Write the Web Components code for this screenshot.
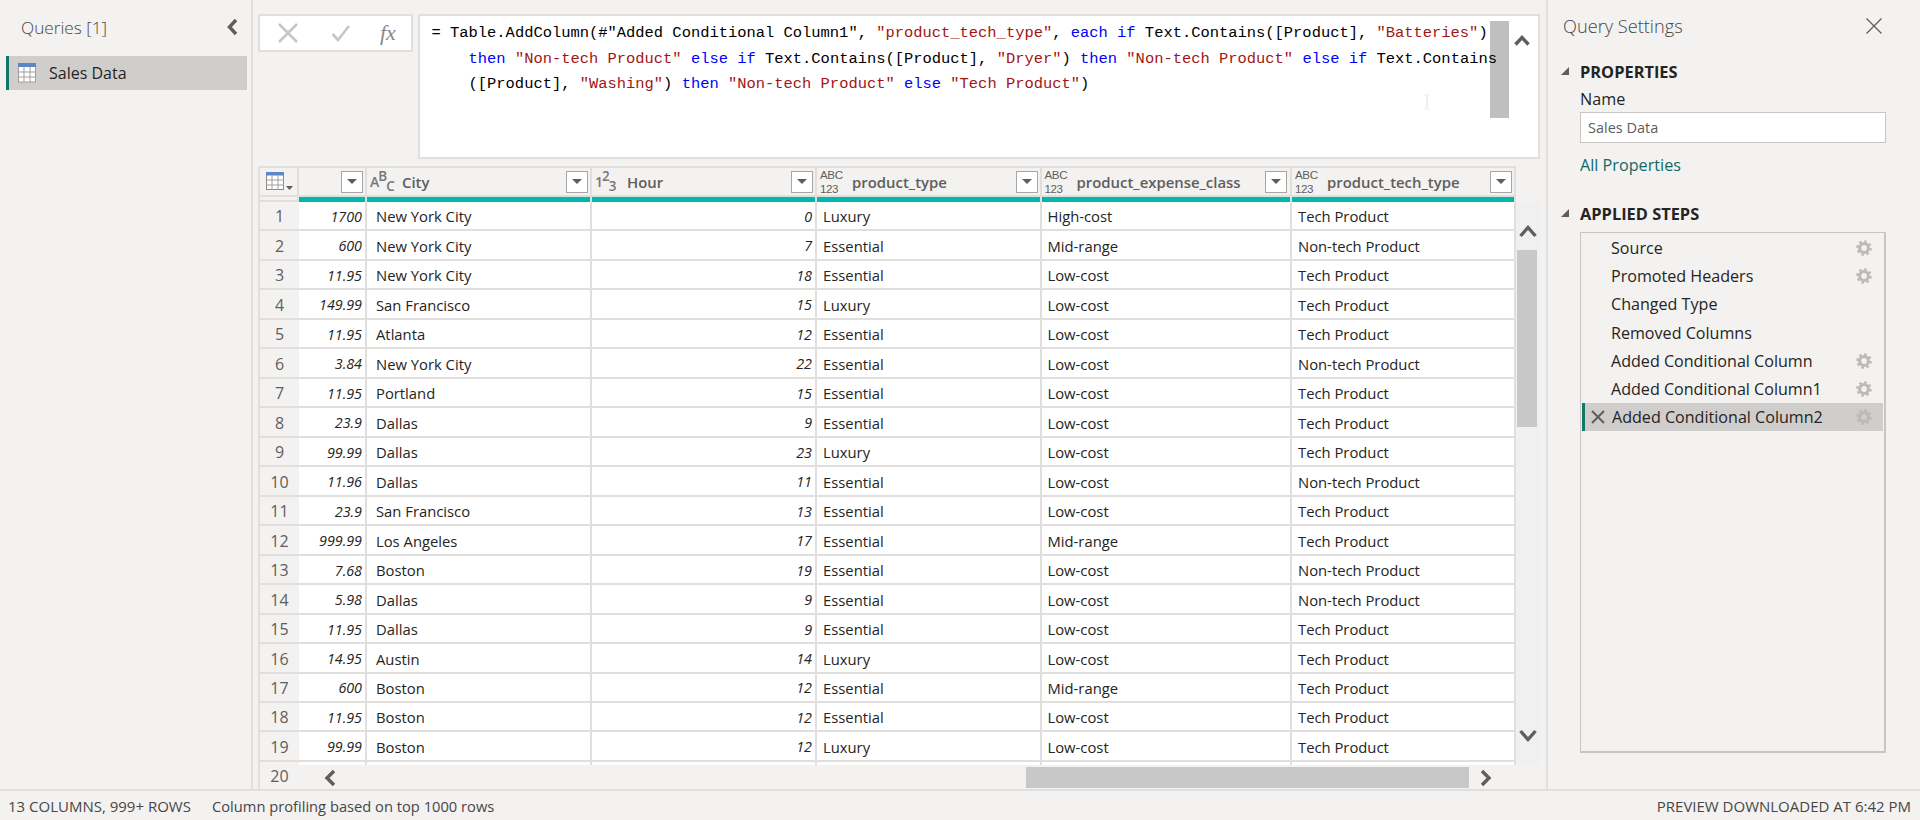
<!DOCTYPE html>
<html>
<head>
<meta charset="utf-8">
<style>
  html, body { margin: 0; height: 100%; overflow: hidden; background: #f3f2f1; }
  body { font-family: "Open Sans", "Liberation Sans", sans-serif; color: #252423; }
</style>
</head>
<body>
<pq-app></pq-app>
<script>
// small icon strings used by more than one element
const chevron = (d, w, h, c) => `<svg width="${w}" height="${h}" viewBox="0 0 ${w} ${h}"><path d="${d}" fill="none" stroke="${c || '#605e5c'}" stroke-width="3.4"/></svg>`;
const gear = `<svg width="16" height="16" viewBox="0 0 16 16"><circle cx="8" cy="8" r="4.4" fill="none" stroke="#bcbab8" stroke-width="3"/><circle cx="8" cy="8" r="6.6" fill="none" stroke="#bcbab8" stroke-width="2.4" stroke-dasharray="2.6 2.58"/></svg>`;

class PqQueries extends HTMLElement {
  constructor() {
    super();
    this.attachShadow({ mode: 'open' });
    this.shadowRoot.innerHTML = `
    <style>
      :host { display: block; width: 251px; flex: none; border-right: 2px solid #e1dfdd; box-sizing: content-box; }
      header { display: flex; justify-content: space-between; align-items: center; height: 56px; padding: 0 12px 2px 21px; box-sizing: border-box; }
      h2 { margin: 0; font-size: 17.2px; font-weight: 300; color: #484644; }
      svg { display: block; }
      .item { display: flex; align-items: center; height: 34px; margin: 0 4px 0 6px; border-left: 3px solid #117865; background: #cfcecc; font-size: 16px; }
      .item svg { margin: 0 13px 0 9px; }
    </style>
    <header><h2>Queries [1]</h2>${chevron('M10 2 L3.5 9 L10 16', 13, 18)}</header>
    <div class="item">
      <svg width="18" height="20" viewBox="0 0 18 20">
        <rect x="0.5" y="1" width="17" height="18" fill="#fff" stroke="#a19f9d"/>
        <rect x="0" y="0" width="18" height="4" fill="#5b87c5"/>
        <path d="M6 4V19M12 4V19M0 9H18M0 14H18" stroke="#a19f9d"/>
      </svg>
      <span>Sales Data</span>
    </div>`;
  }
}
customElements.define('pq-queries', PqQueries);

class PqFormula extends HTMLElement {
  constructor() {
    super();
    this.attachShadow({ mode: 'open' });
    this.shadowRoot.innerHTML = `
    <style>
      :host { display: flex; gap: 5px; height: 145px; flex: none; align-items: flex-start; }
      .tools { display: flex; align-items: center; width: 155px; height: 38px; box-sizing: border-box; background: #fff; border: 2px solid #e1dfdd; flex: none; padding-left: 18px; }
      .tools svg { display: block; }
      .fx { font: italic 22px "Liberation Serif", serif; color: #8a8886; margin-left: 29px; }
      .editor { flex: 1; height: 145px; box-sizing: border-box; background: #fff; border: 2px solid #e1dfdd; display: flex; position: relative; }
      .code { padding: 5px 0 0 11.5px; width: 1060px; flex: none; font: 15.45px/25.5px "Liberation Mono", monospace; color: #000; position: relative; z-index: 1; white-space: pre; }
      .code div + div { padding-left: 4ch; }
      .k { color: #0000ff; }
      .s { color: #a31515; }
      .thumb { position: absolute; left: 1070px; top: 5px; width: 19px; height: 97px; background: #bfbfbf; }
      .up { position: absolute; left: 1094px; top: 14px; }
      .cursor { position: absolute; left: 1003px; top: 78px; }
    </style>
    <div class="tools">
      <svg width="20" height="20" viewBox="0 0 20 20"><path d="M1 1L19 19M19 1L1 19" stroke="#c8c6c4" stroke-width="2.6"/></svg>
      <svg style="margin-left:33px" width="20" height="18" viewBox="0 0 20 18"><path d="M1.5 10L7 16L18 2" fill="none" stroke="#c8c6c4" stroke-width="2.6"/></svg>
      <span class="fx">fx</span>
    </div>
    <div class="editor">
      <div class="code">
        <div>= Table.AddColumn(#"Added Conditional Column1", <span class="s">"product_tech_type"</span>, <span class="k">each if</span> Text.Contains([Product], <span class="s">"Batteries"</span>)</div>
        <div><span class="k">then</span> <span class="s">"Non-tech Product"</span> <span class="k">else if</span> Text.Contains([Product], <span class="s">"Dryer"</span>) <span class="k">then</span> <span class="s">"Non-tech Product"</span> <span class="k">else if</span> Text.Contains</div>
        <div>([Product], <span class="s">"Washing"</span>) <span class="k">then</span> <span class="s">"Non-tech Product"</span> <span class="k">else</span> <span class="s">"Tech Product"</span>)</div>
      </div>
      <div class="thumb"></div>
      <div class="up">${chevron('M1.5 10.5 L8 3.5 L14.5 10.5', 16, 13)}</div>
      <svg class="cursor" width="8" height="16" viewBox="0 0 8 16"><path d="M1 1H3.5V15H1M7 1H4.5V15H7" fill="none" stroke="#eeeeee"/></svg>
    </div>`;
    // the template literal leaves whitespace between the line divs, drop it so white-space: pre adds no blank lines
    const code = this.shadowRoot.querySelector('.code');
    [...code.childNodes].forEach(n => { if (n.nodeType === 3) n.remove(); });
  }
}
customElements.define('pq-formula', PqFormula);

const rows = [
  ['1700', 'New York City', 0, 'Luxury', 'High-cost', 'Tech Product'],
  ['600', 'New York City', 7, 'Essential', 'Mid-range', 'Non-tech Product'],
  ['11.95', 'New York City', 18, 'Essential', 'Low-cost', 'Tech Product'],
  ['149.99', 'San Francisco', 15, 'Luxury', 'Low-cost', 'Tech Product'],
  ['11.95', 'Atlanta', 12, 'Essential', 'Low-cost', 'Tech Product'],
  ['3.84', 'New York City', 22, 'Essential', 'Low-cost', 'Non-tech Product'],
  ['11.95', 'Portland', 15, 'Essential', 'Low-cost', 'Tech Product'],
  ['23.9', 'Dallas', 9, 'Essential', 'Low-cost', 'Tech Product'],
  ['99.99', 'Dallas', 23, 'Luxury', 'Low-cost', 'Tech Product'],
  ['11.96', 'Dallas', 11, 'Essential', 'Low-cost', 'Non-tech Product'],
  ['23.9', 'San Francisco', 13, 'Essential', 'Low-cost', 'Tech Product'],
  ['999.99', 'Los Angeles', 17, 'Essential', 'Mid-range', 'Tech Product'],
  ['7.68', 'Boston', 19, 'Essential', 'Low-cost', 'Non-tech Product'],
  ['5.98', 'Dallas', 9, 'Essential', 'Low-cost', 'Non-tech Product'],
  ['11.95', 'Dallas', 9, 'Essential', 'Low-cost', 'Tech Product'],
  ['14.95', 'Austin', 14, 'Luxury', 'Low-cost', 'Tech Product'],
  ['600', 'Boston', 12, 'Essential', 'Mid-range', 'Tech Product'],
  ['11.95', 'Boston', 12, 'Essential', 'Low-cost', 'Tech Product'],
  ['99.99', 'Boston', 12, 'Luxury', 'Low-cost', 'Tech Product'],
];

class PqGrid extends HTMLElement {
  constructor() {
    super();
    this.attachShadow({ mode: 'open' });
  }

  connectedCallback() {
    this.render();
  }

  render() {
    const filter = `<span class="filter"><i></i></span>`;
    const abc = `<span class="ty abc">ABC<br>123</span>`;
    const heads = [
      ['<span class="ty ab">A<sup>B</sup><sub>C</sub></span>', 'City'],
      ['<span class="ty ab">1<sup>2</sup><sub>3</sub></span>', 'Hour'],
      [abc, 'product_type'],
      [abc, 'product_expense_class'],
      [abc, 'product_tech_type'],
    ];
    let body = '';
    rows.forEach((r, i) => {
      body += `<div class="row">
        <div class="idx">${i + 1}</div>
        <div class="c num">${r[0]}</div>
        <div class="c first">${r[1]}</div>
        <div class="c num">${r[2]}</div>
        <div class="c">${r[3]}</div>
        <div class="c">${r[4]}</div>
        <div class="c">${r[5]}</div>
      </div>`;
    });
    this.shadowRoot.innerHTML = `
    <style>
      :host { display: flex; flex: 1; min-height: 0; margin-top: 7px; }
      .table { --cols: 41px 68px 225px 225px 224.5px 250.5px 224px; width: 1258px; flex: none; position: relative; overflow: hidden; }
      .head, .teal, .row { display: grid; grid-template-columns: var(--cols); }
      .head { height: 31px; box-sizing: border-box; border-top: 2px solid #e1dfdd; background: #f3f2f1; border-bottom: 2px solid #e1dfdd; }
      .head > div { display: flex; align-items: center; border-right: 2px solid #e1dfdd; padding: 0 2px 0 3px; box-sizing: border-box; min-width: 0; }
      .head > div:first-child { border-left: 2px solid #e1dfdd; padding-left: 6px; }
      .head > div:nth-child(6) { padding-right: 3px; }
      .head b { font-size: 14.9px; font-weight: 600; color: #605e5c; flex: 1; white-space: nowrap; }
      .ty { width: 32px; flex: none; color: #605e5c; }
      .abc { font: 400 11.6px/13.4px "Liberation Sans", sans-serif; letter-spacing: -0.4px; color: #605e5c; }
      .ab { font-size: 14px; font-weight: 600; line-height: 20px; color: #797775; letter-spacing: -1px; }
      sup, sub { font-size: 13.5px; line-height: 0; vertical-align: baseline; position: relative; }
      sup { top: -6px; } sub { top: 4px; }
      .filter { width: 22px; height: 22px; box-sizing: border-box; flex: none; background: #fff; border: 1px solid #a8a6a4; display: flex; align-items: center; justify-content: center; margin-left: auto; }
      .filter i { border: 5px solid transparent; border-top: 5.5px solid #605e5c; border-bottom: 0; }
      .teal { height: 5px; }
      .teal div { background: #01b8aa; border-right: 2px solid #e1dfdd; }
      .teal div:first-child { background: #f3f2f1; border-left: 2px solid #e1dfdd; border-bottom: 2px solid #e1dfdd; }
      .row { height: 29.47px; box-sizing: border-box; background: #fff; }
      .idx { background: #f3f2f1; border-left: 2px solid #e1dfdd; border-bottom: 2px solid #e1dfdd; color: #605e5c; font-size: 16px; display: flex; align-items: center; justify-content: center; padding-top: 1.5px; }
      .c { border-right: 2px solid #e1dfdd; border-bottom: 2px solid #e1dfdd; padding: 1.5px 7px 0 6px; font-size: 14.8px; display: flex; align-items: center; white-space: nowrap; overflow: hidden; }
      .first { padding-left: 9px; }
      .num { font-size: 14.3px; font-style: italic; justify-content: flex-end; padding-right: 3px; }
      .hbar { position: absolute; left: 41px; right: 0; top: 599px; height: 25px; background: #f3f2f1; }
      .hbar .t { position: absolute; left: 727px; right: 47px; top: 2px; height: 21px; background: #c8c8c8; }
      .hbar svg { position: absolute; top: 4px; }
      .v { width: 24px; margin-top: 36px; margin-bottom: 24px; background: #f0f0f0; position: relative; }
      .v .t { position: absolute; left: 1px; right: 3px; top: 48px; height: 177px; background: #c8c8c8; }
      .v svg { position: absolute; left: 3px; }
    </style>
    <div class="table">
      <div class="head">
        <div><svg width="28" height="20" viewBox="0 0 28 20"><rect x=".5" y=".5" width="17" height="17" fill="#fff" stroke="#8a8886"/><rect width="18" height="3.5" fill="#5b87c5"/><path d="M6 3V18M12 3V18M0 8H18M0 13H18" stroke="#a19f9d"/><path d="M20 14H27L23.5 18Z" fill="#605e5c"/></svg></div>
        <div>${filter}</div>
        ${heads.map(h => `<div>${h[0]}<b>${h[1]}</b>${filter}</div>`).join('')}
      </div>
      <div class="teal"><div></div><div></div><div></div><div></div><div></div><div></div><div></div></div>
      ${body}
      <div class="row"><div class="idx">20</div><div class="c"></div><div class="c"></div><div class="c"></div><div class="c"></div><div class="c"></div><div class="c"></div></div>
      <div class="hbar">
        ${chevron('M11 2 L4 9 L11 16', 14, 18).replace('<svg', '<svg style="left:24px"')}
        <div class="t"></div>
        ${chevron('M3 2 L10 9 L3 16', 14, 18).replace('<svg', '<svg style="right:23px"')}
      </div>
    </div>
    <div class="v">
      <svg style="top:22px" width="18" height="14" viewBox="0 0 18 14"><path d="M1.5 12 L9 3.5 L16.5 12" fill="none" stroke="#605e5c" stroke-width="3.4"/></svg>
      <div class="t"></div>
      <svg style="bottom:22px" width="18" height="14" viewBox="0 0 18 14"><path d="M1.5 2 L9 10.5 L16.5 2" fill="none" stroke="#605e5c" stroke-width="3.4"/></svg>
    </div>`;
  }
}
customElements.define('pq-grid', PqGrid);

class PqStep extends HTMLElement {
  constructor() {
    super();
    this.attachShadow({ mode: 'open' });
    const sel = this.hasAttribute('selected');
    this.shadowRoot.innerHTML = `
    <style>
      :host { display: flex; align-items: center; height: 28.2px; font-size: 16.1px; }
      :host([selected]) { background: #cfcecc; margin: 0 1px; }
      .bar { width: 3px; align-self: stretch; flex: none; }
      :host([selected]) .bar { background: #117865; }
      .x { width: 28px; flex: none; display: flex; justify-content: center; margin-left: -1px; }
      .x svg, .g svg { display: block; }
      .n { flex: 1; white-space: nowrap; }
      .g { width: 16px; margin-right: 12px; flex: none; }
      :host([selected]) .g { margin-right: 11px; }
    </style>
    <span class="bar"></span>
    <span class="x">${sel ? '<svg width="14" height="14" viewBox="0 0 14 14"><path d="M1 1L13 13M13 1L1 13" stroke="#605e5c" stroke-width="2"/></svg>' : ''}</span>
    <span class="n"><slot></slot></span>
    <span class="g">${this.hasAttribute('gear') ? gear : ''}</span>`;
  }
}
customElements.define('pq-step', PqStep);

class PqSection extends HTMLElement {
  constructor() {
    super();
    this.attachShadow({ mode: 'open' });
    this.shadowRoot.innerHTML = `
    <style>
      :host { display: block; }
      h3 { margin: 0 0 0 -19px; display: flex; align-items: center; height: 24px; font-size: 16.4px; font-weight: 700; color: #252423; }
      h3 i { width: 0; height: 0; border-style: solid; border-width: 0 0 8px 8px; border-color: transparent transparent #605e5c transparent; margin-right: 11px; }
    </style>
    <h3><i></i><slot name="title"></slot></h3>
    <slot></slot>`;
  }
}
customElements.define('pq-section', PqSection);

class PqSettings extends HTMLElement {
  constructor() {
    super();
    this.attachShadow({ mode: 'open' });
    this.shadowRoot.innerHTML = `
    <style>
      :host { display: flex; flex-direction: column; width: 374px; flex: none; border-left: 2px solid #e1dfdd; padding: 0 34px 0 32px; box-sizing: border-box; }
      header { display: flex; justify-content: space-between; align-items: center; height: 59px; margin-left: -17px; margin-right: 4px; padding-bottom: 7px; box-sizing: border-box; }
      h2 { margin: 0; font-size: 18.2px; font-weight: 300; color: #484644; }
      header svg { display: block; }
      .name { margin-top: 6px; font-size: 16.2px; line-height: 20px; }
      .input { margin-top: 3px; height: 31px; box-sizing: border-box; background: #fff; border: 1px solid #c8c6c4; font-size: 14.5px; color: #605e5c; padding: 0 7px; display: flex; align-items: center; }
      .link { margin-top: 12px; font-size: 16.2px; line-height: 20px; color: #0f6a66; margin-bottom: 26px; }
      .steps { margin-top: 7px; height: 521px; box-sizing: border-box; border: 2px solid #c8c6c4; border-width: 1px 2px 2px 1px; padding-top: 1px; }
    </style>
    <header>
      <h2>Query Settings</h2>
      <svg width="16" height="16" viewBox="0 0 16 16"><path d="M0.5 0.5L15.5 15.5M15.5 0.5L0.5 15.5" stroke="#605e5c" stroke-width="1.3"/></svg>
    </header>
    <pq-section>
      <span slot="title">PROPERTIES</span>
      <div class="name">Name</div>
      <div class="input">Sales Data</div>
      <div class="link">All Properties</div>
    </pq-section>
    <pq-section>
      <span slot="title">APPLIED STEPS</span>
      <div class="steps">
        <pq-step gear>Source</pq-step>
        <pq-step gear>Promoted Headers</pq-step>
        <pq-step>Changed Type</pq-step>
        <pq-step>Removed Columns</pq-step>
        <pq-step gear>Added Conditional Column</pq-step>
        <pq-step gear>Added Conditional Column1</pq-step>
        <pq-step gear selected>Added Conditional Column2</pq-step>
      </div>
    </pq-section>`;
  }
}
customElements.define('pq-settings', PqSettings);

class PqStatus extends HTMLElement {
  constructor() {
    super();
    this.attachShadow({ mode: 'open' });
    this.shadowRoot.innerHTML = `
    <style>
      :host { display: flex; align-items: center; height: 31px; flex: none; box-sizing: border-box; border-top: 2px solid #e1dfdd; padding: 0 9px 0 8px; font-size: 14.7px; color: #484644; }
      .count { width: 204px; flex: none; white-space: nowrap; font-size: 15px; }
      .time { margin-left: auto; font-size: 15px; }
    </style>
    <span class="count">13 COLUMNS, 999+ ROWS</span><span>Column profiling based on top 1000 rows</span><span class="time">PREVIEW DOWNLOADED AT 6:42 PM</span>`;
  }
}
customElements.define('pq-status', PqStatus);

class PqApp extends HTMLElement {
  constructor() {
    super();
    this.attachShadow({ mode: 'open' });
    this.shadowRoot.innerHTML = `
    <style>
      :host { display: flex; flex-direction: column; height: 820px; width: 1920px; overflow: hidden; }
      main { display: flex; height: 789px; flex: none; }
      .center { display: flex; flex-direction: column; flex: 1; min-width: 0; padding: 14px 6px 0 5px; }
    </style>
    <main>
      <pq-queries></pq-queries>
      <div class="center">
        <pq-formula></pq-formula>
        <pq-grid></pq-grid>
      </div>
      <pq-settings></pq-settings>
    </main>
    <pq-status></pq-status>`;
  }
}
customElements.define('pq-app', PqApp);
</script>
</body>
</html>
